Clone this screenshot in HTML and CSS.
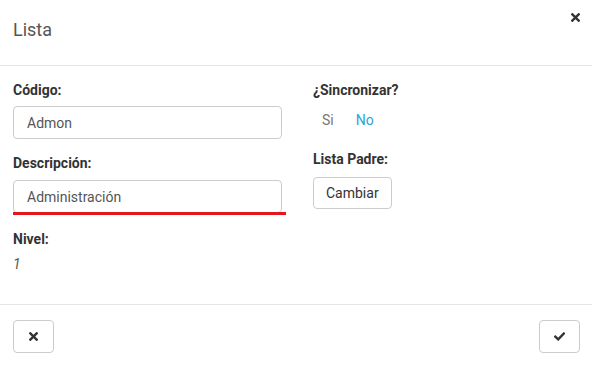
FILE: index.html
```html
<!DOCTYPE html>
<html lang="es">
<head>
    <meta charset="UTF-8">
    <meta name="viewport" content="width=device-width, initial-scale=1.0">
    <title>Lista</title>
    <link rel="stylesheet" href="styles.css">
</head>
<body>

    <div class="modal">
        <!-- Header -->
        <div class="modal-header">
            <h4 class="modal-title">Lista</h4>
            <button class="close-btn" aria-label="Cerrar">
                <svg width="9" height="9" viewBox="0 0 10 10"><path d="M1.5 1.5 L8.5 8.5 M8.5 1.5 L1.5 8.5" stroke="#333" stroke-width="2.6" stroke-linecap="square"/></svg>
            </button>
        </div>

        <!-- Body -->
        <div class="modal-body">
            <div class="col">
                <div class="field">
                    <label for="codigo">Código:</label>
                    <input type="text" id="codigo" value="Admon">
                </div>
                <div class="field">
                    <label for="descripcion">Descripción:</label>
                    <input type="text" id="descripcion" value="Administración">
                    <div class="underline"></div>
                </div>
                <div class="field">
                    <label>Nivel:</label>
                    <span class="value">1</span>
                </div>
            </div>

            <div class="col">
                <div class="field">
                    <label>¿Sincronizar?</label>
                    <div class="toggle">
                        <span class="opt">Si</span>
                        <span class="opt active">No</span>
                    </div>
                </div>
                <div class="field">
                    <label>Lista Padre:</label>
                    <div><button class="btn">Cambiar</button></div>
                </div>
            </div>
        </div>

        <!-- Footer -->
        <div class="modal-footer">
            <button class="btn icon-btn" aria-label="Cancelar">
                <svg width="9" height="9" viewBox="0 0 10 10"><path d="M1.5 1.5 L8.5 8.5 M8.5 1.5 L1.5 8.5" stroke="#333" stroke-width="2.6" stroke-linecap="square"/></svg>
            </button>
            <button class="btn icon-btn" aria-label="Guardar">
                <svg width="11" height="9" viewBox="0 0 11 9"><path d="M1.3 4.6 L4.2 7.4 L9.8 1.6" fill="none" stroke="#333" stroke-width="2.4" stroke-linecap="square"/></svg>
            </button>
        </div>
    </div>

</body>
</html>
```

FILE: styles.css
```css
/* Basic Reset */
* {
    margin: 0;
    padding: 0;
    box-sizing: border-box;
}

body {
    font-family: Roboto, 'Liberation Sans', sans-serif;
    font-size: 14px;
    color: #333;
    background: #fff;
}

.modal {
    width: 592px;
}

.modal-header {
    height: 66px;
    padding: 0 12px 0 13px;
    display: flex;
    justify-content: space-between;
    align-items: flex-start;
    border-bottom: 1px solid #e5e5e5;
}

.modal-title {
    margin-top: 20px;
    font-size: 18px;
    font-weight: 400;
    line-height: 20px;
    color: #555;
}

.close-btn {
    margin-top: 12px;
    width: 9px;
    height: 10px;
    border: none;
    background: none;
    display: flex;
    align-items: center;
    justify-content: center;
}

.modal-body {
    padding: 14px 13px 30px;
    display: grid;
    grid-template-columns: 269px 1fr;
    column-gap: 31px;
}

.field {
    display: flex;
    flex-direction: column;
    margin-bottom: 14px;
}

.col .field:last-child {
    margin-bottom: 0;
}

.field label {
    font-size: 14px;
    font-weight: 700;
    line-height: 20px;
    color: #333;
    margin-bottom: 6px;
}

.field input {
    height: 33px;
    padding: 0 13px;
    border: 1px solid #ccc;
    border-radius: 4px;
    font-family: inherit;
    font-size: 14px;
    color: #555;
    outline: none;
}

.field label[for="descripcion"] {
    margin-bottom: 7px;
}

.underline {
    width: 273px;
    height: 3px;
    margin-top: -1px;
    background: #e4161b;
}

.field .value {
    font-style: italic;
    color: #555;
    line-height: 20px;
    margin-top: -1px;
}

.toggle {
    display: flex;
    gap: 22px;
    padding-left: 9px;
    margin-top: 4px;
    line-height: 20px;
}

.toggle .opt {
    color: #777;
}

.toggle .opt.active {
    color: #2aa4d5;
}

.col:last-child .field:first-child {
    margin-bottom: 19px;
}

.col:last-child .field:last-child label {
    margin-bottom: 8px;
}

.btn {
    height: 32px;
    padding: 0 12px;
    border: 1px solid #ccc;
    border-radius: 4px;
    background: #fff;
    font-family: inherit;
    font-size: 14px;
    color: #333;
    cursor: pointer;
}

.modal-footer {
    padding: 15px 12px 15px 13px;
    display: flex;
    justify-content: space-between;
    border-top: 1px solid #e5e5e5;
}

.icon-btn {
    width: 41px;
    height: 33px;
    padding: 0;
    display: flex;
    align-items: center;
    justify-content: center;
}
```
